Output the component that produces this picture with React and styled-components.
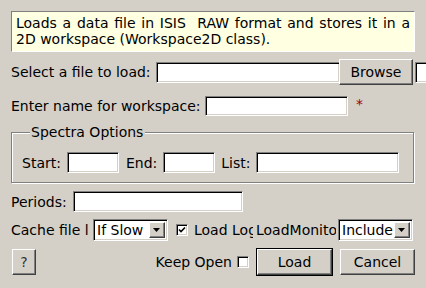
import React from "react";
import styled, { createGlobalStyle, css } from "styled-components";

const Global = createGlobalStyle`
  html, body { margin: 0; padding: 0; background: #d4d0c8; overflow: hidden; }
  body { font-family: "DejaVu Sans", sans-serif; font-size: 14px; color: #000; }
  * { box-sizing: border-box; }
`;

const Dialog = styled.div`
  width: 426px;
  height: 288px;
  padding: 11px 0 0 11px;
  display: flex;
  flex-direction: column;
  overflow: hidden;
  line-height: 16px;
`;

const Description = styled.div`
  width: 404px;
  height: 41px;
  background: #ffffe1;
  border: 1px solid;
  border-color: #808080 #ffffff #ffffff #808080;
  padding: 3px 4px 0 4px;
  white-space: pre-wrap;
  text-align: justify;
`;

const Row = styled.div`
  display: flex;
  align-items: center;
  flex-shrink: 0;
  margin-top: ${(p) => p.$mt || 0}px;
  height: ${(p) => p.$h}px;
  width: ${(p) => p.$w || 415}px;
`;

const Label = styled.span`
  flex-shrink: 0;
  white-space: nowrap;
  overflow: hidden;
  width: ${(p) => (p.$w ? `${p.$w}px` : "auto")};
  margin-left: ${(p) => p.$ml || 0}px;
  margin-right: ${(p) => p.$mr || 0}px;
`;

const sunken = css`
  border: 1px solid;
  border-color: #808080 #ffffff #ffffff #808080;
  box-shadow: inset 1px 1px 0 #000, inset -1px -1px 0 #d4d0c8;
`;

const raised = css`
  border: 1px solid;
  border-color: #ffffff #404040 #404040 #ffffff;
  box-shadow: inset -1px -1px 0 #808080;
`;

const TextInput = styled.div`
  ${sunken};
  flex-shrink: 0;
  background: #fff;
  width: ${(p) => p.$w}px;
  height: ${(p) => p.$h || 21}px;
  margin-left: ${(p) => p.$ml || 0}px;
`;

const Button = styled.div`
  ${raised};
  flex-shrink: 0;
  display: flex;
  align-items: center;
  justify-content: center;
  background: #d4d0c8;
  width: ${(p) => p.$w}px;
  height: ${(p) => p.$h || 26}px;
  margin-left: ${(p) => p.$ml || 0}px;
  color: ${(p) => p.$color || "#000"};
`;

const DefaultFrame = styled.div`
  flex-shrink: 0;
  border: 1px solid #000;
  margin-left: ${(p) => p.$ml || 0}px;
  display: flex;
`;

const Required = styled.span`
  color: #a00000;
  margin-left: 8px;
  margin-top: -5px;
`;

const Group = styled.fieldset`
  margin: 7px 0 0 0;
  width: 403px;
  border: 1px solid #808080;
  box-shadow: 1px 1px 0 #fff, inset 1px 1px 0 #fff;
  padding: 12px 10px 9px 10px;
  min-width: 0;
  flex-shrink: 0;
`;

const Legend = styled.legend`
  padding: 0 2px 0 1px;
  margin-left: 8px;
  background: #d4d0c8;
  line-height: 16px;
`;

const Combo = styled.div`
  ${sunken};
  flex-shrink: 0;
  display: flex;
  align-items: center;
  background: #fff;
  width: ${(p) => p.$w}px;
  height: 22px;
  padding: 2px 2px 2px 3px;
  margin-left: ${(p) => p.$ml || 0}px;
`;

const ComboText = styled.span`
  flex: 1;
  white-space: nowrap;
  overflow: hidden;
`;

const ComboArrow = styled.div`
  ${raised};
  width: 16px;
  height: 16px;
  background: #d4d0c8;
  display: flex;
  align-items: center;
  justify-content: center;
`;

const CheckBox = styled.div`
  ${sunken};
  flex-shrink: 0;
  width: 12px;
  height: 12px;
  background: #fff;
  display: flex;
  align-items: center;
  justify-content: center;
  margin-left: ${(p) => p.$ml || 0}px;
`;

const Spacer = styled.div`
  flex: 1;
`;

const Arrow = () => (
  <svg width="8" height="5" viewBox="0 0 8 5">
    <path d="M0 0H7L3.5 4Z" fill="#000" />
  </svg>
);

const Check = () => (
  <svg width="8" height="8" viewBox="0 0 8 8">
    <path d="M1 3.5L3 5.5L7 1.5" stroke="#000" strokeWidth="1.6" fill="none" />
  </svg>
);

export default function App() {
  return (
    <>
      <Global />
      <Dialog>
        <Description>
          {"Loads a data file in ISIS  RAW format and stores it in a 2D workspace (Workspace2D class)."}
        </Description>

        <Row $mt={7} $h={26} $w={520}>
          <Label $w={145}>Select a file to load:</Label>
          <TextInput $w={184} />
          <Button $w={74} $ml={-1}>Browse</Button>
          <TextInput $w={120} $ml={2} />
        </Row>

        <Row $mt={10} $h={22}>
          <Label $w={194}>Enter name for workspace:</Label>
          <TextInput $w={143} $h={20} />
          <Required>*</Required>
        </Row>

        <Group>
          <Legend>Spectra Options</Legend>
          <Row $h={21} $w={381}>
            <Label $mr={6}>Start:</Label>
            <TextInput $w={52} />
            <Label $ml={7} $mr={6}>End:</Label>
            <TextInput $w={52} />
            <Label $ml={6} $mr={6}>List:</Label>
            <TextInput $w={143} />
          </Row>
        </Group>

        <Row $mt={8} $h={21}>
          <Label $w={62}>Periods:</Label>
          <TextInput $w={170} />
        </Row>

        <Row $mt={7} $h={22}>
          <Label $w={78}>Cache file loading:</Label>
          <Combo $w={75} $ml={4}>
            <ComboText>If Slow</ComboText>
            <ComboArrow><Arrow /></ComboArrow>
          </Combo>
          <CheckBox $ml={8}><Check /></CheckBox>
          <Label $w={59} $ml={6}>Load Log Files</Label>
          <Label $w={80} $ml={3}>LoadMonitors:</Label>
          <Combo $w={75} $ml={2}>
            <ComboText>Include</ComboText>
            <ComboArrow><Arrow /></ComboArrow>
          </Combo>
        </Row>

        <Row $mt={7} $h={28} $w={404}>
          <Button $w={24} $ml={1} $color="#333">?</Button>
          <Spacer />
          <Label>Keep Open</Label>
          <CheckBox $ml={5} />
          <DefaultFrame $ml={7}>
            <Button $w={75} $h={26}>Load</Button>
          </DefaultFrame>
          <Button $w={75} $ml={7}>Cancel</Button>
        </Row>
      </Dialog>
    </>
  );
}
